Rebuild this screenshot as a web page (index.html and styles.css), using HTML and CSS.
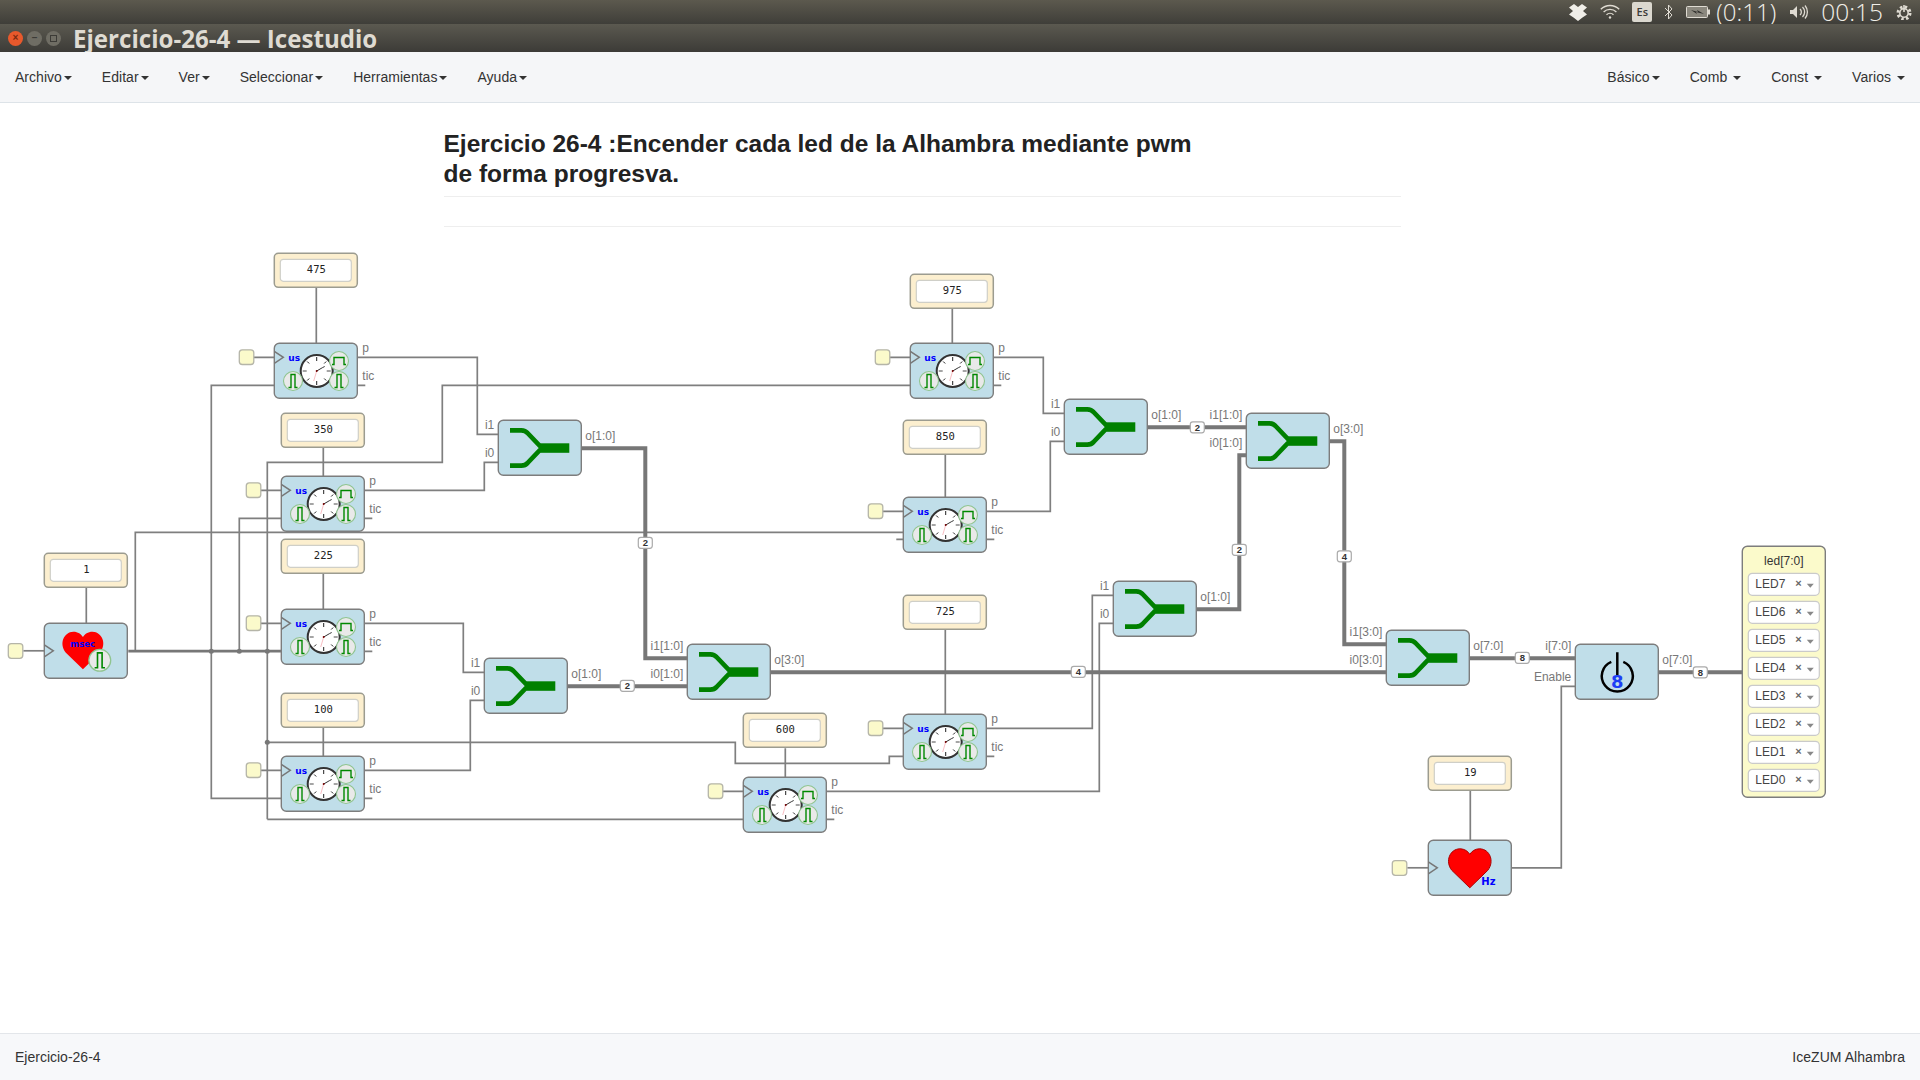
FILE: index.html
```html
<!DOCTYPE html>
<html lang="es">
<head>
<meta charset="utf-8">
<title>Ejercicio-26-4 — Icestudio</title>
<link rel="stylesheet" href="styles.css">
</head>
<body>
<header class="panel">
  <svg class="tray dropbox" viewBox="0 0 18 17"><path d="M5 0 9 3 13 0 18 3.5 14 7 18 10.5 13.500 13.500 9 17 4.500 13.500 0 10.500 4 7 0 3.500Z"/></svg>
  <svg class="tray wifi" viewBox="0 0 20 16"><path d="M.8 5.300A13 13 0 0 1 19.200 5.300M3.600 8A9 9 0 0 1 16.400 8M6.500 10.800A5 5 0 0 1 13.500 10.800"/><circle cx="10" cy="13.500" r="1.200"/></svg>
  <span class="kbd">Es</span>
  <svg class="tray bt" viewBox="0 0 9 16"><path d="M1 4 8 11 4.500 15V1L8 5 1 12"/></svg>
  <svg class="tray batt" viewBox="0 0 24 12"><rect class="batt-fill" x=".5" y=".5" width="21" height="11" rx="1"/><rect class="batt-nub" x="22" y="3.500" width="2" height="5"/><path class="batt-bolt" d="M5 4 12 6 11 4 18 8 10 6 11 8Z"/></svg>
  <span class="clock batt-time">(0:11)</span>
  <svg class="tray vol" viewBox="0 0 19 14"><path class="vol-sp" d="M0 5H3L7 1V13L3 9H0Z"/><path d="M10 4A4 4 0 0 1 10 10M12.500 2A7 7 0 0 1 12.500 12M15 .5A10 10 0 0 1 15 13.500"/></svg>
  <span class="clock now">00:15</span>
  <svg class="tray cog" viewBox="0 0 16 16"><circle class="cog-teeth" cx="8" cy="9" r="6"/><circle cx="8" cy="9" r="4.200"/><path d="M8 1V8"/></svg>
</header>

<div class="titlebar">
  <span class="wbtn wbtn-close">×</span>
  <span class="wbtn wbtn-min">–</span>
  <span class="wbtn wbtn-max"><i class="wbtn-sq"></i></span>
  <span class="wtitle">Ejercicio-26-4 — Icestudio</span>
</div>

<nav class="navbar">
  <a class="nav-item">Archivo<b class="caret"></b></a>
  <a class="nav-item">Editar<b class="caret"></b></a>
  <a class="nav-item">Ver<b class="caret"></b></a>
  <a class="nav-item">Seleccionar<b class="caret"></b></a>
  <a class="nav-item">Herramientas<b class="caret"></b></a>
  <a class="nav-item">Ayuda<b class="caret"></b></a>
  <span class="nav-space"></span>
  <a class="nav-item nav-right">Básico<b class="caret"></b></a>
  <a class="nav-item nav-right">Comb <b class="caret"></b></a>
  <a class="nav-item nav-right">Const <b class="caret"></b></a>
  <a class="nav-item nav-right">Varios <b class="caret"></b></a>
</nav>

<main class="board">
  <section class="note">
    <h2 class="note-title">Ejercicio 26-4 :Encender cada led de la Alhambra mediante pwm<br>de forma progresva.</h2>
    <hr class="note-rule">
  </section>

  <svg class="diagram" viewBox="0 103 1920 930" width="1920" height="930">
    <defs>
      <path id="pulse-n" d="M-4.500 6.500H-2V-6.500H2V6.500H4.500"/>
      <g id="pulse-narrow">
        <circle class="sub" r="9.500"/>
        <use href="#pulse-n" class="pulse"/>
      </g>
      <g id="pulse-wide">
        <circle class="sub" r="9.500"/>
        <path class="pulse" d="M-7 3.500H-5V-3.500H5V3.500H7"/>
      </g>
      <g id="timer">
        <path class="wire" d="M-21 14H0M83 42H91"/>
        <rect class="pin" x="-35" y="6.500" width="14.500" height="14.700" rx="3"/>
        <rect class="block" width="83" height="55" rx="5"/>
        <path class="clk" d="M0 8 9 14 0 20"/>
        <text class="unit" x="14" y="17.500">us</text>
        <g transform="translate(42.400 27.700)">
          <circle class="face" r="16"/>
          <path class="tick" d="M0-14V-10M0 14V10M-9.500-9.500-7.500-7.500M9.500-9.500 7.500-7.500M-9.500 9.500-7.500 7.500M9.500 9.500 7.500 7.500"/>
          <path class="tick-g" d="M-14 0H-10M14 0H10"/>
          <path class="hand" d="M0 0 6-3.500M6-3.500 8-4.500"/>
          <path class="hand-r" d="M0 0-3 10"/>
          <circle class="hub" r="1"/>
        </g>
        <use href="#pulse-wide" x="64.700" y="17.700"/>
        <use href="#pulse-narrow" x="18.700" y="37.700"/>
        <use href="#pulse-narrow" x="64.700" y="37.700"/>
      </g>
      <g id="mux">
        <rect class="block" width="83" height="55" rx="5"/>
        <path class="mux-line" d="M11.700 10H23Q27 10 29.500 13L43.500 27.700 29.500 42.400Q27 45.400 23 45.400H11.700"/>
        <rect class="mux-bar" x="42" y="23" width="29" height="9.500"/>
      </g>
      <g id="const">
        <rect class="const" width="83" height="34" rx="4"/>
        <rect class="const-in" x="6" y="6" width="71" height="22" rx="3"/>
      </g>
      <path id="heart" d="M22 39.500 4 22C-3 13 2 .8 12 .5 17 .5 20 3 22 6 24 3 27 .5 32 .5 42 .8 47 13 40 22Z"/>
      <g id="hb">
        <path class="wire" d="M-21 27.500H0"/>
        <rect class="pin" x="-36" y="20.300" width="14.500" height="14.700" rx="3"/>
        <rect class="block" width="83" height="55" rx="5"/>
        <path class="clk" d="M0 21.500 9 27.500 0 33.500"/>
      </g>
      <g id="sel">
        <rect class="sel" width="71" height="22" rx="4"/>
        <text class="sel-x" x="47" y="14">×</text>
        <path class="sel-caret" d="M58.500 10.500H65.500L62 14.500Z"/>
      </g>
    </defs>

    <g transform="translate(.3 .3)">
      <!-- thin wires -->
      <path class="wire" d="M316 287V343M323 447V476M323 573V609M323 727V756M86 587V623M952 308V343M945 454V497M945 629V714M785 748V777M1470 790V840"/>
      <path class="wire" d="M135 650.500V532H903M896 539H903"/>
      <path class="wire" d="M211 651V385H274M211 651V798H281"/>
      <path class="wire" d="M239 651V518H281"/>
      <path class="wire" d="M267 819V462H442V385H910M267 819H743"/>
      <path class="wire" d="M267 742H735V763H889V756H903"/>
      <path class="wire" d="M357 357H477V434H498M364 490H484V462H498M364 623H463V672H484M364 770H470V700H484"/>
      <path class="wire" d="M993 357H1043V413H1064M986 511H1050V441H1064M986 728H1092V595H1113M826 791H1099V623H1113"/>
      <path class="wire" d="M1575 686H1561V867.500H1511"/>
      <path class="wire wire-net" d="M128 650.800H281"/>
      <g class="dots">
        <circle cx="211" cy="651" r="2.500"/>
        <circle cx="239" cy="651" r="2.500"/>
        <circle cx="267" cy="651" r="2.500"/>
        <circle cx="267" cy="742" r="2.500"/>
      </g>
      <!-- buses -->
      <path class="bus" d="M581 448H645V658H687M567 686H687M770 672H1386M1147 427H1246M1196 609H1239V455H1246M1329 441H1344V644H1386M1469 658H1575M1658 672H1742"/>

      <!-- blocks -->
      <use href="#const" x="274" y="253"/><text class="val" x="316" y="273">475</text>
      <use href="#const" x="281" y="413"/><text class="val" x="323" y="433">350</text>
      <use href="#const" x="281" y="539"/><text class="val" x="323" y="559">225</text>
      <use href="#const" x="281" y="693"/><text class="val" x="323" y="713">100</text>
      <use href="#const" x="44" y="553"/><text class="val" x="86" y="573">1</text>
      <use href="#const" x="743" y="713"/><text class="val" x="785" y="733">600</text>
      <use href="#const" x="903" y="595"/><text class="val" x="945" y="615">725</text>
      <use href="#const" x="910" y="274"/><text class="val" x="952" y="294">975</text>
      <use href="#const" x="903" y="420"/><text class="val" x="945" y="440">850</text>
      <use href="#const" x="1428" y="756"/><text class="val" x="1470" y="776">19</text>

      <use href="#timer" x="274" y="343"/>
      <use href="#timer" x="281" y="476"/>
      <use href="#timer" x="281" y="609"/>
      <use href="#timer" x="281" y="756"/>
      <use href="#timer" x="743" y="777"/>
      <use href="#timer" x="903" y="714"/>
      <use href="#timer" x="910" y="343"/>
      <use href="#timer" x="903" y="497"/>

      <use href="#mux" x="498" y="420"/>
      <use href="#mux" x="484" y="658"/>
      <use href="#mux" x="687" y="644"/>
      <use href="#mux" x="1064" y="399"/>
      <use href="#mux" x="1246" y="413"/>
      <use href="#mux" x="1113" y="581"/>
      <use href="#mux" x="1386" y="630"/>

      <!-- heart msec -->
      <use href="#hb" x="44" y="623"/>
      <use href="#heart" class="heart-a" transform="translate(61.500 631) scale(.96)"/>
      <text class="unit unit-m" x="70" y="647">msec</text>
      <use href="#pulse-narrow" transform="translate(99.500 660) scale(1.150)"/>

      <!-- heart Hz -->
      <use href="#hb" x="1428" y="840"/>
      <use href="#heart" class="heart-b" transform="translate(1447.500 848)"/>
      <text class="unit unit-h" x="1481" y="885">Hz</text>

      <!-- tristate -->
      <rect class="block" x="1575" y="644" width="83" height="55" rx="5"/>
      <path class="ts" d="M1611 661.500A15.500 15.500 0 1 0 1623 661.500M1617 652V675"/>
      <text class="ts-n" x="1617" y="688">8</text>

      <!-- LED -->
      <rect class="led" x="1742" y="546" width="83" height="251" rx="5"/>
      <text class="led-t" x="1783.500" y="565">led[7:0]</text>
      <use href="#sel" x="1748" y="573"/><text class="sel-t" x="1755" y="588">LED7</text>
      <use href="#sel" x="1748" y="601"/><text class="sel-t" x="1755" y="616">LED6</text>
      <use href="#sel" x="1748" y="629"/><text class="sel-t" x="1755" y="644">LED5</text>
      <use href="#sel" x="1748" y="657"/><text class="sel-t" x="1755" y="672">LED4</text>
      <use href="#sel" x="1748" y="685"/><text class="sel-t" x="1755" y="700">LED3</text>
      <use href="#sel" x="1748" y="713"/><text class="sel-t" x="1755" y="728">LED2</text>
      <use href="#sel" x="1748" y="741"/><text class="sel-t" x="1755" y="756">LED1</text>
      <use href="#sel" x="1748" y="769"/><text class="sel-t" x="1755" y="784">LED0</text>

      <!-- bus badges -->
      <rect class="bd" x="638" y="537" width="14" height="11" rx="2.500"/><text class="bd-t" x="645" y="546">2</text>
      <rect class="bd" x="620" y="680" width="14" height="11" rx="2.500"/><text class="bd-t" x="627" y="689">2</text>
      <rect class="bd" x="1071" y="666" width="14" height="11" rx="2.500"/><text class="bd-t" x="1078" y="675">4</text>
      <rect class="bd" x="1190" y="421.500" width="14" height="11" rx="2.500"/><text class="bd-t" x="1197" y="430.500">2</text>
      <rect class="bd" x="1232" y="544" width="14" height="11" rx="2.500"/><text class="bd-t" x="1239" y="553">2</text>
      <rect class="bd" x="1337" y="550.500" width="14" height="11" rx="2.500"/><text class="bd-t" x="1344" y="559.500">4</text>
      <rect class="bd" x="1515" y="652" width="14" height="11" rx="2.500"/><text class="bd-t" x="1522" y="661">8</text>
      <rect class="bd" x="1693" y="666.500" width="14" height="11" rx="2.500"/><text class="bd-t" x="1700" y="675.500">8</text>

      <!-- port labels, output side -->
      <g class="lbl">
        <text x="362" y="352">p</text><text x="362" y="380">tic</text>
        <text x="369" y="485">p</text><text x="369" y="513">tic</text>
        <text x="369" y="618">p</text><text x="369" y="646">tic</text>
        <text x="369" y="765">p</text><text x="369" y="793">tic</text>
        <text x="831" y="786">p</text><text x="831" y="814">tic</text>
        <text x="991" y="723">p</text><text x="991" y="751">tic</text>
        <text x="998" y="352">p</text><text x="998" y="380">tic</text>
        <text x="991" y="506">p</text><text x="991" y="534">tic</text>
        <text x="585" y="440">o[1:0]</text>
        <text x="571" y="678">o[1:0]</text>
        <text x="774" y="664">o[3:0]</text>
        <text x="1151" y="419">o[1:0]</text>
        <text x="1333" y="433">o[3:0]</text>
        <text x="1200" y="601">o[1:0]</text>
        <text x="1473" y="650">o[7:0]</text>
        <text x="1662" y="664">o[7:0]</text>
      </g>
      <g class="lbl lbl-end">
        <text x="494" y="429">i1</text><text x="494" y="457">i0</text>
        <text x="480" y="667">i1</text><text x="480" y="695">i0</text>
        <text x="1060" y="408">i1</text><text x="1060" y="436">i0</text>
        <text x="1109" y="590">i1</text><text x="1109" y="618">i0</text>
        <text x="683" y="650">i1[1:0]</text><text x="683" y="678">i0[1:0]</text>
        <text x="1242" y="419">i1[1:0]</text><text x="1242" y="447">i0[1:0]</text>
        <text x="1382" y="636">i1[3:0]</text><text x="1382" y="664">i0[3:0]</text>
        <text x="1571" y="650">i[7:0]</text><text x="1571" y="681">Enable</text>
      </g>
    </g>
  </svg>
</main>

<footer class="footer">
  <span>Ejercicio-26-4</span>
  <span class="foot-board">IceZUM Alhambra</span>
</footer>
</body>
</html>
```
FILE: styles.css
```css
html, body { margin: 0; height: 100%; }
body {
  display: flex;
  flex-direction: column;
  height: 1080px;
  overflow: hidden;
  background: #fff;
  font-family: "Liberation Sans", Arial, sans-serif;
  font-size: 14px;
  color: #333;
}

/* Ubuntu top panel */
.panel {
  height: 24px;
  flex: none;
  display: flex;
  align-items: center;
  justify-content: flex-end;
  padding-right: 8px;
  background: linear-gradient(#5c594e, #3f3e39);
  color: #dfdbd2;
}
.tray { display: block; flex: none; fill: none; stroke: #dfdbd2; stroke-width: 1.3; }
.dropbox { width: 18px; height: 17px; fill: #f0eee8; stroke: none; margin-right: 13px; }
.wifi { width: 20px; height: 16px; margin-right: 12px; }
.wifi circle { fill: #dfdbd2; stroke: none; }
.kbd {
  width: 20px;
  height: 20px;
  margin-right: 12px;
  border-radius: 2px;
  background: #dbd8cf;
  color: #3c3b37;
  font: 600 11px/20px "Open Sans", sans-serif;
  text-align: center;
}
.bt { width: 9px; height: 16px; margin-right: 13px; stroke-width: 1; }
.batt { width: 24px; height: 12px; margin-right: 6px; stroke-width: 1; }
.batt-fill { fill: #8b887e; stroke: #dfdbd2; }
.batt-nub { fill: #dfdbd2; stroke: none; }
.batt-bolt { fill: #2e2d2a; stroke: none; }
.clock { font: 300 24px/24px "Open Sans", sans-serif; color: #f2efe8; white-space: nowrap; }
.batt-time { margin-right: 14px; }
.vol { width: 19px; height: 14px; margin-right: 12px; }
.vol-sp { fill: #dfdbd2; stroke: none; }
.now { margin-right: 13px; font-size: 24.5px; }
.cog { width: 16px; height: 16px; stroke-width: 1.6; }
.cog-teeth { stroke-dasharray: 2.400 2.312; stroke-width: 3; }

/* window title bar */
.titlebar {
  height: 28px;
  flex: none;
  display: flex;
  align-items: center;
  gap: 4px;
  padding-left: 8px;
  background: linear-gradient(#5b5950, #3c3b37);
}
.wbtn {
  width: 15px;
  height: 15px;
  border-radius: 50%;
  display: flex;
  align-items: center;
  justify-content: center;
  font: bold 10px/1 "Liberation Sans", sans-serif;
  color: #3c3b37;
  background: #6f6d64;
}
.wbtn-close { background: #e8592c; color: #7a2a10; }
.wbtn-sq { display: block; width: 5px; height: 5px; border: 1px solid #3c3b37; }
.wtitle {
  margin-left: 8px;
  padding-top: 2px;
  font: 700 24.1px/26px "Open Sans", sans-serif;
  color: #dfdbd2;
  white-space: nowrap;
}

/* application menu */
.navbar {
  position: relative;
  height: 50px;
  flex: none;
  display: flex;
  align-items: center;
  background: #f5f6f8;
  border-bottom: 1px solid #dde3e8;
}
.nav-item { display: block; padding: 0 15px; white-space: pre; color: #333; letter-spacing: .025px; }
.nav-right { letter-spacing: .06px; }
.nav-space { flex: 1; }
.caret {
  display: inline-block;
  width: 0;
  height: 0;
  margin-left: 2px;
  vertical-align: middle;
  border-top: 4px solid #333;
  border-left: 4px solid transparent;
  border-right: 4px solid transparent;
}

/* canvas */
.board { position: relative; flex: 1; min-height: 0; overflow: hidden; }
.diagram { display: block; }
.note { position: absolute; left: 443.5px; top: 26px; width: 957px; }
.note-title {
  margin: 0;
  padding-bottom: 7px;
  border-bottom: 1px solid #eee;
  font-size: 24.5px;
  line-height: 30px;
  font-weight: bold;
  color: #222;
}
.note-rule { margin: 29px 0 0; border: 0; border-top: 1px solid #eee; }

.wire { fill: none; stroke: #7f7f7f; stroke-width: 1.700; }
.wire-net { stroke-width: 2.600; stroke: #777; }
.dots { fill: #777; }
.bus { fill: none; stroke: #777; stroke-width: 4; }

.block { fill: #c0dee9; stroke: #7d7d7d; stroke-width: 1.400; }
.pin { fill: #fbfacb; stroke: #b5b5a8; stroke-width: 1.300; }
.clk { fill: none; stroke: #777; stroke-width: 1.500; }
.unit { font: bold 9px "DejaVu Sans", sans-serif; fill: #00f; }
.unit-m { font-size: 8.5px; }
.unit-h { font-size: 10px; }
.face { fill: #fff; stroke: #333; stroke-width: 2; }
.tick { fill: none; stroke: #222; stroke-width: 1; }
.tick-g { fill: none; stroke: #888; stroke-width: 1.500; }
.hand { fill: none; stroke: #333; stroke-width: 1; }
.hand-r { fill: none; stroke: #f3a0a8; stroke-width: .7; }
.hub { fill: #700; }
.sub { fill: #e9e9e9; stroke: #8fc48f; stroke-width: 1.100; }
.pulse { fill: none; stroke: #080; stroke-width: 1.400; }

.mux-line { fill: none; stroke: #008000; stroke-width: 4.700; }
.mux-bar { fill: #008000; }

.const { fill: #fcefcf; stroke: #9c9c90; stroke-width: 1.500; }
.const-in { fill: #fff; stroke: #cfcfc8; stroke-width: 1.200; }
.val { font: 10.500px "DejaVu Sans Mono", monospace; fill: #222; text-anchor: middle; }

.heart-a { fill: #f00; }
.heart-b { fill: #f00; stroke: #a00; stroke-width: 1; }

.ts { fill: none; stroke: #000; stroke-width: 2.500; }
.ts-n { font: bold 18px "DejaVu Sans", sans-serif; fill: #1d3ff5; text-anchor: middle; }

.led { fill: #fbfacb; stroke: #7d7d7d; stroke-width: 1.400; }
.led-t { font-size: 12px; fill: #333; text-anchor: middle; }
.sel { fill: #fff; stroke: #cacaca; stroke-width: 1.200; }
.sel-t { font-size: 12px; fill: #444; }
.sel-x { font-size: 11px; font-weight: bold; fill: #666; }
.sel-caret { fill: #888; }

.bd { fill: #fff; stroke: #aaa; stroke-width: 1.200; }
.bd-t { font-size: 9.500px; font-weight: bold; fill: #333; text-anchor: middle; }

.lbl { font-size: 12px; fill: #777; }
.lbl-end { text-anchor: end; }

/* status bar */
.footer {
  height: 46px;
  flex: none;
  display: flex;
  align-items: center;
  justify-content: space-between;
  padding: 0 15px;
  background: #f7f8fa;
  border-top: 1px solid #e3e6ea;
  color: #333;
}
.foot-board { letter-spacing: .05px; }
```
